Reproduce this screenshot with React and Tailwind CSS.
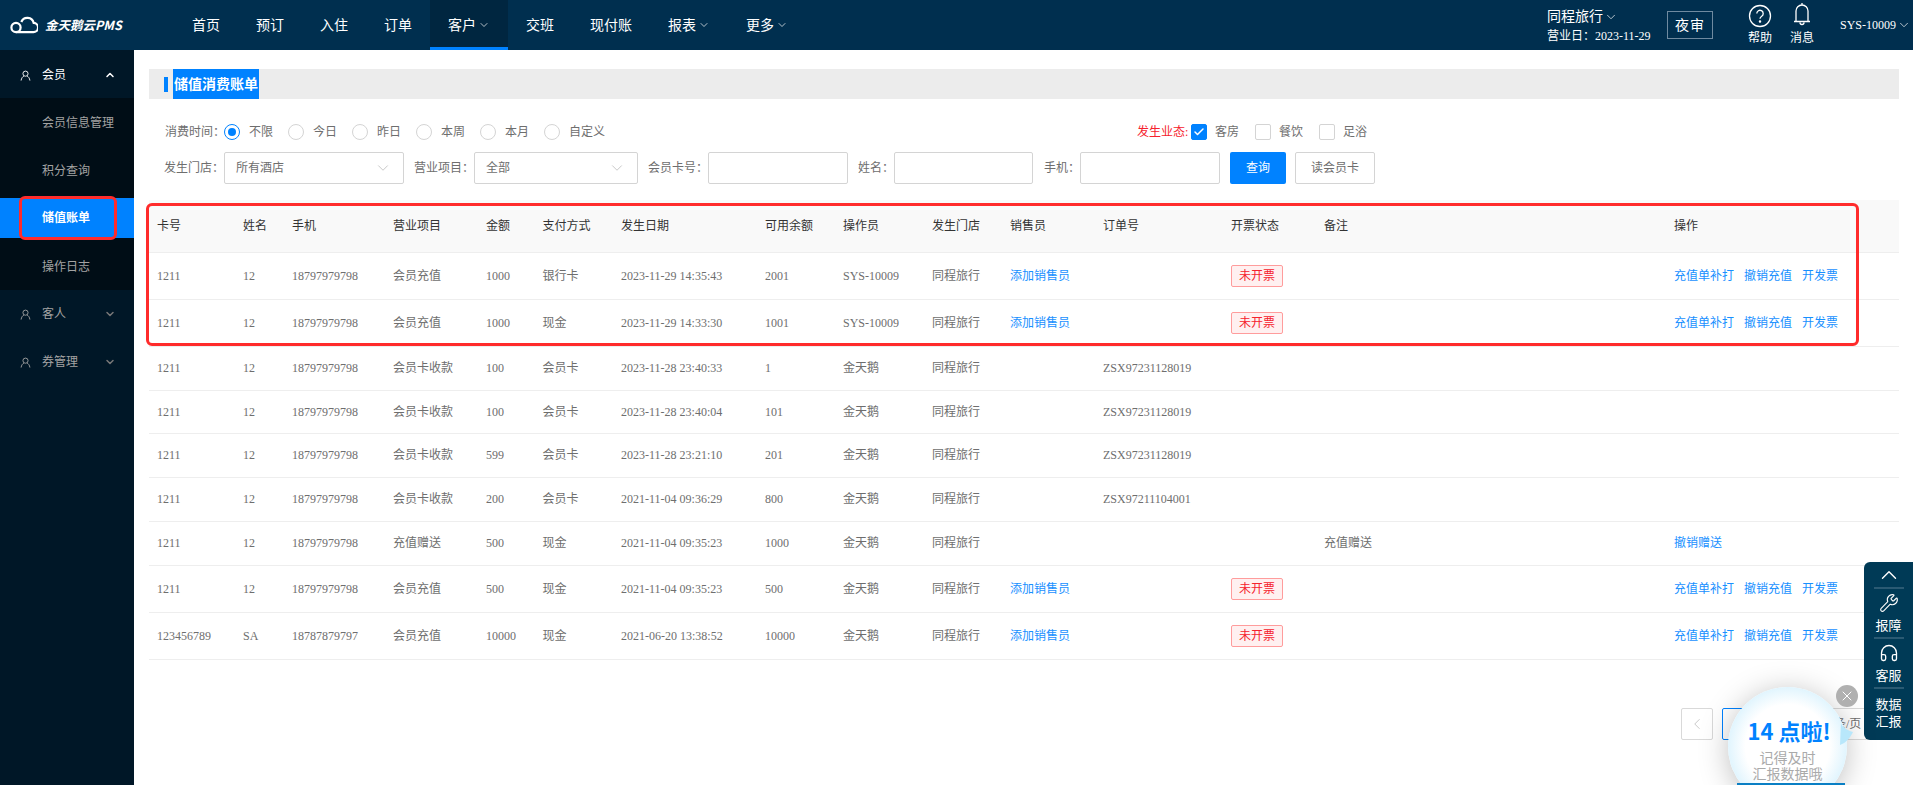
import React from 'react'
import { ChevronDown, ChevronUp, ChevronLeft, Wrench, Headphones, Check, X } from 'lucide-react'

const navItems = [
  { label: '首页' },
  { label: '预订' },
  { label: '入住' },
  { label: '订单' },
  { label: '客户', arrow: true, active: true },
  { label: '交班' },
  { label: '现付账' },
  { label: '报表', arrow: true },
  { label: '更多', arrow: true },
]

const columns = ['卡号', '姓名', '手机', '营业项目', '金额', '支付方式', '发生日期', '可用余额', '操作员', '发生门店', '销售员', '订单号', '开票状态', '备注', '操作']

const colWidths = ['w-[86px]', 'w-[49px]', 'w-[101px]', 'w-[93px]', 'w-[56.5px]', 'w-[78.5px]', 'w-[144px]', 'w-[78px]', 'w-[89px]', 'w-[78px]', 'w-[93px]', 'w-[128px]', 'w-[93px]', 'w-[350px]', '']

const rows = [
  { h: 'h-[47px]', card: '1211', name: '12', phone: '18797979798', item: '会员充值', amount: '1000', pay: '银行卡', date: '2023-11-29 14:35:43', left: '2001', op: 'SYS-10009', add: true, invoice: true, links: 3 },
  { h: 'h-[47px]', card: '1211', name: '12', phone: '18797979798', item: '会员充值', amount: '1000', pay: '现金', date: '2023-11-29 14:33:30', left: '1001', op: 'SYS-10009', add: true, invoice: true, links: 3 },
  { h: 'h-[44px]', card: '1211', name: '12', phone: '18797979798', item: '会员卡收款', amount: '100', pay: '会员卡', date: '2023-11-28 23:40:33', left: '1', op: '金天鹅', order: 'ZSX97231128019' },
  { h: 'h-[43px]', card: '1211', name: '12', phone: '18797979798', item: '会员卡收款', amount: '100', pay: '会员卡', date: '2023-11-28 23:40:04', left: '101', op: '金天鹅', order: 'ZSX97231128019' },
  { h: 'h-[44px]', card: '1211', name: '12', phone: '18797979798', item: '会员卡收款', amount: '599', pay: '会员卡', date: '2023-11-28 23:21:10', left: '201', op: '金天鹅', order: 'ZSX97231128019' },
  { h: 'h-[44px]', card: '1211', name: '12', phone: '18797979798', item: '会员卡收款', amount: '200', pay: '会员卡', date: '2021-11-04 09:36:29', left: '800', op: '金天鹅', order: 'ZSX97211104001' },
  { h: 'h-[44px]', card: '1211', name: '12', phone: '18797979798', item: '充值赠送', amount: '500', pay: '现金', date: '2021-11-04 09:35:23', left: '1000', op: '金天鹅', note: '充值赠送', revoke: true },
  { h: 'h-[47px]', card: '1211', name: '12', phone: '18797979798', item: '会员充值', amount: '500', pay: '现金', date: '2021-11-04 09:35:23', left: '500', op: '金天鹅', add: true, invoice: true, links: 3 },
  { h: 'h-[47px]', card: '123456789', name: 'SA', phone: '18787879797', item: '会员充值', amount: '10000', pay: '现金', date: '2021-06-20 13:38:52', left: '10000', op: '金天鹅', add: true, invoice: true, links: 3 },
]

function UserIcon({ className }) {
  return (
    <svg viewBox="0 0 12 12" fill="none" stroke="currentColor" strokeWidth="1" className={className}>
      <circle cx="6" cy="4" r="2.8" />
      <path d="M1.2 11.5c.3-2.6 1.8-4.4 3-4.8M10.8 11.5c-.3-2.6-1.8-4.4-3-4.8" />
    </svg>
  )
}

function Radio({ label, checked }) {
  return (
    <label className="flex items-center w-[64px] shrink-0">
      <span className={`w-4 h-4 rounded-full border flex items-center justify-center ${checked ? 'border-[#0082ff]' : 'border-[#d4d4d4]'}`}>
        {checked && <span className="w-2 h-2 rounded-full bg-[#0082ff]" />}
      </span>
      <span className="ml-[9px]">{label}</span>
    </label>
  )
}

function CheckItem({ label, checked }) {
  return (
    <label className="flex items-center w-[64px] shrink-0">
      <span className={`w-4 h-4 rounded-[2px] border flex items-center justify-center ${checked ? 'bg-[#0082ff] border-[#0082ff]' : 'border-[#d4d4d4]'}`}>
        {checked && <Check className="w-3 h-3 text-white" strokeWidth={3} />}
      </span>
      <span className="ml-2">{label}</span>
    </label>
  )
}

function Field({ label, className, width }) {
  return (
    <div className={`flex items-center ${className}`}>
      <span className="whitespace-nowrap">{label}</span>
      <div className={`h-8 border border-[#d4d4d4] rounded-[2px] bg-white ${width}`} />
    </div>
  )
}

function SelectBox({ label, value, className }) {
  return (
    <div className="flex items-center">
      <span className="w-[60px] whitespace-nowrap">{label}</span>
      <div className={`h-8 border border-[#d4d4d4] rounded-[2px] flex items-center justify-between pl-[11px] pr-[11px] ${className}`}>
        <span>{value}</span>
        <ChevronDown className="w-[18px] h-[18px] text-[#b5b5b5]" strokeWidth={1} />
      </div>
    </div>
  )
}

export default function App() {
  return (
    <div className="relative h-[785px] overflow-hidden bg-white text-[12px] text-[#6e6e6e] font-['Liberation_Serif','Noto_Sans_CJK_SC',serif]">
      {/* Header */}
      <header className="h-[50px] flex items-stretch bg-[#002f4f] text-white">
        <div className="w-[174px] shrink-0 flex items-center pl-[10px]">
          <svg viewBox="0 0 28 18" fill="none" stroke="white" strokeWidth="2.2" className="w-[28px] h-[18px]">
            <circle cx="6" cy="11.5" r="4.6" />
            <path d="M6 16.1h17.2a4.6 4.6 0 0 0 .5-9.2A6.5 6.5 0 0 0 11.3 6" />
          </svg>
          <span className="ml-[7px] text-[12.5px] font-bold italic font-['Noto_Sans_CJK_SC',sans-serif] whitespace-nowrap">金天鹅云PMS</span>
        </div>
        <nav className="flex">
          {navItems.map(item => (
            <div
              key={item.label}
              className={`flex items-center px-[18px] text-[14px] ${item.active ? 'bg-[#002640] border-b-[3px] border-[#0082ff] pt-[3px]' : ''}`}
            >
              {item.label}
              {item.arrow && <ChevronDown className="w-[14px] h-[14px] pl-[2px]" strokeWidth={1.4} />}
            </div>
          ))}
        </nav>
        <div className="ml-auto flex items-center">
          <div className="w-[120px]">
            <div className="flex items-center text-[14px] leading-[20px]">
              同程旅行
              <ChevronDown className="w-[14px] h-[14px] ml-[1px]" strokeWidth={1.2} />
            </div>
            <div className="text-[12px] leading-[16px] mt-[1px] whitespace-nowrap">营业日：2023-11-29</div>
          </div>
          <div className="w-[46px] h-[28px] border border-[#6f8aa0] flex items-center justify-center text-[14px] tracking-[1px]">夜审</div>
          <div className="ml-[33px] w-[28px] flex flex-col items-center">
            <svg viewBox="0 0 24 24" fill="none" stroke="white" strokeWidth="1.3" className="w-[24px] h-[24px]">
              <circle cx="12" cy="12" r="10.5" />
              <path d="M8.8 9.5a3.2 3.2 0 1 1 4.9 2.7c-1 .7-1.7 1.2-1.7 2.6" />
              <circle cx="12" cy="17.6" r=".6" fill="white" />
            </svg>
            <span className="mt-[2px] leading-[16px] whitespace-nowrap">帮助</span>
          </div>
          <div className="ml-[14px] w-[28px] flex flex-col items-center -mt-[2px]">
            <svg viewBox="0 0 20 24" fill="none" stroke="white" strokeWidth="1.3" className="w-[20px] h-[24px]">
              <path d="M2 19.5h16M4 19.5V9a6 6 0 0 1 12 0v10.5M10 1v2M8 20.5a2 2 0 0 0 4 0" />
            </svg>
            <span className="mt-[4px] leading-[16px] whitespace-nowrap">消息</span>
          </div>
          <div className="ml-[24px] w-[73px] flex items-center whitespace-nowrap">
            SYS-10009
            <ChevronDown className="w-[14px] h-[14px] ml-[1px]" strokeWidth={1.2} />
          </div>
        </div>
      </header>

      <div className="flex h-[735px]">
        {/* Sidebar */}
        <aside className="w-[134px] shrink-0 bg-[#001727]">
          <div className="h-[48px] flex items-center pl-[20px] pr-[18px] pt-[2px] text-white">
            <UserIcon className="w-[11px] h-[11px]" />
            <span className="ml-[11px]">会员</span>
            <ChevronUp className="w-[12px] h-[12px] ml-auto" strokeWidth={3} />
          </div>
          <div className="bg-[#000d16] text-[#a3a3a3]">
            <div className="h-[48px] flex items-center pl-[42px] pt-[2px]">会员信息管理</div>
            <div className="h-[48px] flex items-center pl-[42px] pt-[2px]">积分查询</div>
            <div className="relative my-[4px] h-[40px] flex items-center pl-[42px] bg-[#0082ff] text-white font-bold">
              储值账单
              <div className="absolute left-[19px] -top-[2px] w-[98px] h-[44px] border-[3px] border-[#ff2b2b] rounded-[6px]" />
            </div>
            <div className="h-[48px] flex items-center pl-[42px] pt-[2px]">操作日志</div>
          </div>
          <div className="h-[48px] flex items-center pl-[20px] pr-[18px] text-[#a3a3a3]">
            <UserIcon className="w-[11px] h-[11px]" />
            <span className="ml-[11px]">客人</span>
            <ChevronDown className="w-[12px] h-[12px] ml-auto text-[#777]" strokeWidth={3} />
          </div>
          <div className="h-[48px] flex items-center pl-[20px] pr-[18px] text-[#a3a3a3]">
            <UserIcon className="w-[11px] h-[11px]" />
            <span className="ml-[11px]">券管理</span>
            <ChevronDown className="w-[12px] h-[12px] ml-auto text-[#777]" strokeWidth={3} />
          </div>
        </aside>

        {/* Main */}
        <main className="flex-1 min-w-0 pt-[19px] pl-[15px] pr-[14px]">
          <div className="h-[30px] flex items-center bg-[#ececec] pl-[15px]">
            <span className="w-1 h-[15px] bg-[#0082ff]" />
            <span className="ml-[5px] h-[30px] px-[1px] flex items-center bg-[#0082ff] text-white text-[14px] font-bold whitespace-nowrap">储值消费账单</span>
          </div>

          {/* Filters */}
          <div className="mt-[25px] h-4 flex items-center pl-[16px] pr-[8px]">
            <span className="w-[59px] whitespace-nowrap">消费时间：</span>
            <Radio label="不限" checked />
            <Radio label="今日" />
            <Radio label="昨日" />
            <Radio label="本周" />
            <Radio label="本月" />
            <Radio label="自定义" />
            <span className="ml-[529px] w-[54px] whitespace-nowrap text-[#f5222d]">发生业态:</span>
            <CheckItem label="客房" checked />
            <CheckItem label="餐饮" />
            <CheckItem label="足浴" />
          </div>

          <div className="mt-[12px] flex items-center pl-[15px] gap-[10px]">
            <SelectBox label="发生门店：" value="所有酒店" className="w-[180px]" />
            <SelectBox label="营业项目：" value="全部" className="w-[164px]" />
            <Field label="会员卡号：" width="w-[140px]" />
            <Field label="姓名：" width="w-[139px]" />
            <Field label="手机：" width="w-[140px]" className="ml-[1px]" />
            <button className="w-[56px] h-8 rounded-[2px] bg-[#0082ff] text-white">查询</button>
            <button className="-ml-[1px] w-[80px] h-8 rounded-[2px] border border-[#d4d4d4]">读会员卡</button>
          </div>

          {/* Table */}
          <div className="relative mt-[16px]">
            <table className="w-full table-fixed border-collapse">
              <colgroup>
                {colWidths.map((w, i) => <col key={i} className={w} />)}
              </colgroup>
              <thead>
                <tr className="h-[52px] bg-[#f9f9f9] text-[#333]">
                  {columns.map(c => <th key={c} className="pl-2 text-left font-normal border-b border-[#eee]">{c}</th>)}
                </tr>
              </thead>
              <tbody>
                {rows.map((r, i) => (
                  <tr key={i} className={r.h}>
                    <td className="pl-2 border-b border-[#eee]">{r.card}</td>
                    <td className="pl-2 border-b border-[#eee]">{r.name}</td>
                    <td className="pl-2 border-b border-[#eee]">{r.phone}</td>
                    <td className="pl-2 border-b border-[#eee]">{r.item}</td>
                    <td className="pl-2 border-b border-[#eee]">{r.amount}</td>
                    <td className="pl-2 border-b border-[#eee]">{r.pay}</td>
                    <td className="pl-2 border-b border-[#eee] whitespace-nowrap">{r.date}</td>
                    <td className="pl-2 border-b border-[#eee]">{r.left}</td>
                    <td className="pl-2 border-b border-[#eee]">{r.op}</td>
                    <td className="pl-2 border-b border-[#eee]">同程旅行</td>
                    <td className="pl-2 border-b border-[#eee] text-[#1890ff] whitespace-nowrap">{r.add && '添加销售员'}</td>
                    <td className="pl-2 border-b border-[#eee] whitespace-nowrap">{r.order}</td>
                    <td className="pl-2 border-b border-[#eee]">
                      {r.invoice && (
                        <span className="inline-flex items-center justify-center w-[52px] h-[22px] bg-[#fff0f0] border border-[#ff9c9c] rounded-[2px] text-[#f5222d]">未开票</span>
                      )}
                    </td>
                    <td className="pl-2 border-b border-[#eee]">{r.note}</td>
                    <td className="pl-2 border-b border-[#eee] text-[#1890ff] whitespace-nowrap">
                      {r.links && (
                        <div className="flex gap-[10px]">
                          <span>充值单补打</span>
                          <span>撤销充值</span>
                          <span>开发票</span>
                        </div>
                      )}
                      {r.revoke && '撤销赠送'}
                    </td>
                  </tr>
                ))}
              </tbody>
            </table>
            {/* annotation around the first rows */}
            <div className="absolute -left-[3px] top-[3px] w-[1713px] h-[143px] border-[3px] border-[#ff2b2b] rounded-[6px] pointer-events-none" />
          </div>

          {/* Pagination */}
          <div className="mt-[48px] flex justify-end items-center gap-[9px]">
            <button className="w-8 h-8 flex items-center justify-center border border-[#d9d9d9] rounded-[2px] text-[#b5b5b5]">
              <ChevronLeft className="w-[18px] h-[18px]" strokeWidth={1} />
            </button>
            <button className="w-8 h-8 border border-[#0082ff] rounded-[2px] text-[#0082ff]">1</button>
            <button className="w-8 h-8 border border-[#d9d9d9] rounded-[2px]">2</button>
            <div className="w-[95px] h-8 flex items-center pl-[14px] border border-[#d9d9d9] rounded-[2px]">10 条/页</div>
          </div>
        </main>
      </div>

      {/* Floating tools */}
      <div className="absolute right-0 top-[562px] w-[49px] h-[178px] rounded-l-[6px] bg-[#003a56] text-white text-[13px] flex flex-col items-center">
        <div className="h-[27px] w-[30px] flex items-center justify-center border-b-2 border-[#2a5a73]">
          <ChevronUp className="w-[26px] h-[26px]" strokeWidth={1.3} />
        </div>
        <div className="h-[50px] w-[30px] flex flex-col items-center justify-end pb-[2px] border-b-2 border-[#2a5a73]">
          <Wrench className="w-[20px] h-[20px]" strokeWidth={1.3} />
          <span className="mt-[3px] whitespace-nowrap">报障</span>
        </div>
        <div className="h-[50px] w-[30px] flex flex-col items-center justify-end pb-[2px] border-b-2 border-[#2a5a73]">
          <Headphones className="w-[20px] h-[20px]" strokeWidth={1.6} />
          <span className="mt-[3px] whitespace-nowrap">客服</span>
        </div>
        <div className="mt-[7px] w-[30px] text-center leading-[17px]">数据汇报</div>
      </div>

      {/* 14 o'clock reminder bubble */}
      <div className="absolute left-[1728px] top-[687px] w-[119px] h-[119px] rounded-full bg-[radial-gradient(circle,#ffffff_50%,#d0effd_82%,#7fd2f7_100%)] shadow-[0_4px_30px_rgba(0,0,0,0.25)] flex flex-col items-center font-['Noto_Sans_CJK_SC',sans-serif]">
        <svg viewBox="0 0 14 22" className="absolute left-[112px] top-[36px] w-[14px] h-[22px]">
          <path d="M1 0c1 4 5 7 12 9-3 6-7 11-13 13z" fill="#b8e7fb" />
        </svg>
        <div className="mt-[29px] ml-[3px] text-[22px] leading-[28px] font-bold text-[#0082ff] whitespace-nowrap">14 点啦!</div>
        <div className="mt-[5px] text-[14px] leading-[16px] text-[#aaa] text-center">记得及时<br />汇报数据哦</div>
      </div>
      <div className="absolute left-[1737px] top-[783px] w-[108px] h-[2px] bg-[#0a7fc4]" />
      <div className="absolute left-[1836px] top-[685px] w-[22px] h-[22px] rounded-full bg-[#b0b0b0] flex items-center justify-center text-white">
        <X className="w-[16px] h-[16px]" strokeWidth={1.5} />
      </div>
    </div>
  )
}
